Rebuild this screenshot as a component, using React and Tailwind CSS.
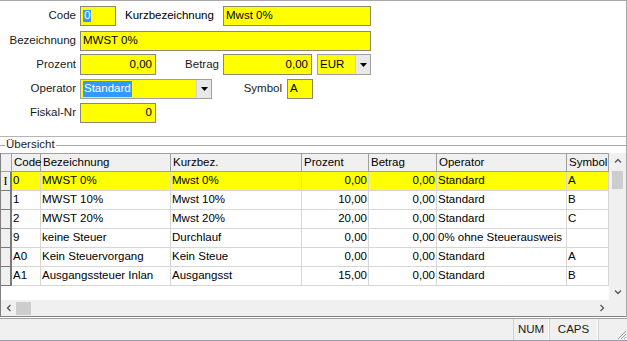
import React from "react";

const font = { fontFamily: '"Liberation Sans", Arial, sans-serif' };

function Input({ w, h = "h-[20px]", children, right = false }) {
  return (
    <div
      className={`${w} ${h} bg-[#ffff00] border border-[#8a8a6e] flex items-center ${right ? "justify-end pr-[3px]" : "pl-[2px]"} text-black`}
    >
      {children}
    </div>
  );
}

function DropBtn() {
  return (
    <div className="w-[15px] h-full bg-[#e8e8e8] border-l border-[#d0d0d0] flex items-center justify-center">
      <svg width="7" height="4" viewBox="0 0 7 4">
        <path d="M0 0h7L3.5 4z" fill="#000" />
      </svg>
    </div>
  );
}

function Label({ w, children, className = "" }) {
  return <div className={`${w} text-right text-[#1a1a1a] ${className}`}>{children}</div>;
}

const rows = [
  ["0", "MWST 0%", "Mwst 0%", "0,00", "0,00", "Standard", "A"],
  ["1", "MWST 10%", "Mwst 10%", "10,00", "0,00", "Standard", "B"],
  ["2", "MWST 20%", "Mwst 20%", "20,00", "0,00", "Standard", "C"],
  ["9", "keine Steuer", "Durchlauf", "0,00", "0,00", "0% ohne Steuerausweis", ""],
  ["A0", "Kein Steuervorgang", "Kein Steue", "0,00", "0,00", "Standard", "A"],
  ["A1", "Ausgangssteuer Inlan", "Ausgangsst", "15,00", "0,00", "Standard", "B"],
];

const widths = ["w-[29px]", "w-[130px]", "w-[131px]", "w-[67px]", "w-[68px]", "w-[130px]", "w-[42px]"];
const headers = ["Code", "Bezeichnung", "Kurzbez.", "Prozent", "Betrag", "Operator", "Symbol"];

function Chevron({ d }) {
  return (
    <svg width="8" height="8" viewBox="0 0 8 8">
      <path d={d} fill="none" stroke="#555" strokeWidth="1.3" />
    </svg>
  );
}

export default function App() {
  return (
    <div className="w-[627px] h-[341px] bg-white overflow-hidden text-[11.5px] leading-none flex flex-col" style={font}>
      <div className="flex-1 flex flex-col border-t border-r border-[#a8a8a8]">
        {/* Form */}
        <div className="h-[136px] border-b border-[#b4b4b4] flex flex-col">
          <div className="flex items-center h-[20px] mt-[5px]">
            <Label w="w-[76px]">Code</Label>
            <div className="ml-[4px]">
              <Input w="w-[36px]">
                <span className="bg-[#3399ff] text-white px-[1px]">0</span>
              </Input>
            </div>
            <div className="ml-[9px] w-[98px]">Kurzbezeichnung</div>
            <Input w="w-[148px]">Mwst 0%</Input>
          </div>
          <div className="flex items-center h-[20px] mt-[5px]">
            <Label w="w-[76px]">Bezeichnung</Label>
            <div className="ml-[4px]">
              <Input w="w-[291px]">MWST 0%</Input>
            </div>
          </div>
          <div className="flex items-center h-[21px] mt-[3px]">
            <Label w="w-[76px]">Prozent</Label>
            <div className="ml-[4px]">
              <Input w="w-[76px]" h="h-[21px]" right>0,00</Input>
            </div>
            <Label w="w-[63px]">Betrag</Label>
            <div className="ml-[4px]">
              <Input w="w-[89px]" h="h-[21px]" right>0,00</Input>
            </div>
            <div className="ml-[5px] w-[54px] h-[21px] border border-[#a0a0a0] flex">
              <div className="flex-1 bg-[#ffff00] flex items-center pl-[2px]">EUR</div>
              <DropBtn />
            </div>
          </div>
          <div className="flex items-center h-[20px] mt-[4px]">
            <Label w="w-[76px]">Operator</Label>
            <div className="ml-[4px] w-[132px] h-[20px] border border-[#a0a0a0] flex">
              <div className="flex-1 bg-[#ffff00] flex items-center pl-[2px]">
                <span className="bg-[#3399ff] text-white px-[1px] py-[2px]">Standard</span>
              </div>
              <DropBtn />
            </div>
            <Label w="w-[70px]">Symbol</Label>
            <div className="ml-[5px]">
              <Input w="w-[26px]">A</Input>
            </div>
          </div>
          <div className="flex items-center h-[20px] mt-[4px]">
            <Label w="w-[76px]">Fiskal-Nr</Label>
            <div className="ml-[4px]">
              <Input w="w-[76px]" right>0</Input>
            </div>
          </div>
        </div>

        {/* Group label */}
        <div className="h-[16px] flex items-center">
          <div className="w-[5px] h-px bg-[#a8a8a8]" />
          <span className="px-[1px] text-[#1a1a1a]">Übersicht</span>
          <div className="flex-1 h-px bg-[#a8a8a8]" />
        </div>

        {/* Grid */}
        <div className="h-[164px] border-b border-l border-[#808080] flex flex-col">
          <div className="flex flex-1">
            <div className="w-[608px] flex flex-col">
              <div className="flex h-[19px] border-t border-b border-[#a0a0a0] bg-[#f0f0f0]">
                <div className="w-[11px] border-r border-[#a0a0a0]" />
                {headers.map((h, i) => (
                  <div key={h} className={`${widths[i]} border-r border-[#a0a0a0] flex items-center pl-[2px]`}>
                    {h}
                  </div>
                ))}
              </div>
              {rows.map((r, ri) => (
                <div key={ri} className={`flex h-[19px] ${ri === 0 ? "bg-[#ffff00]" : "bg-white"}`}>
                  <div className="w-[11px] bg-[#f0f0f0] border-r-2 border-b border-[#7a7a7a] flex items-center justify-center">
                    {ri === 0 && <span className="text-[12px]" style={{ fontFamily: '"Liberation Serif", serif' }}>I</span>}
                  </div>
                  {r.map((c, ci) => (
                    <div
                      key={ci}
                      className={`${widths[ci]} border-r border-b border-[#d6d6d6] flex items-center ${ci === 3 || ci === 4 ? "justify-end pr-[1px]" : "pl-[1px]"} overflow-hidden whitespace-nowrap`}
                    >
                      {c}
                    </div>
                  ))}
                </div>
              ))}
            </div>
            <div className="w-[17px] bg-[#f0f0f0] flex flex-col items-center">
              <div className="h-[16px] flex items-center justify-center">
                <Chevron d="M1 5.5L4 2.5L7 5.5" />
              </div>
              <div className="w-[11px] h-[18px] bg-[#cdcdcd] mt-[2px]" />
              <div className="flex-1" />
              <div className="h-[16px] flex items-center justify-center">
                <Chevron d="M1 2.5L4 5.5L7 2.5" />
              </div>
            </div>
          </div>
          <div className="h-[16px] flex">
            <div className="w-[608px] bg-[#f0f0f0] flex items-center">
              <div className="w-[15px] flex justify-center">
                <Chevron d="M5.5 1L2.5 4L5.5 7" />
              </div>
              <div className="w-[15px] h-[13px] bg-[#cdcdcd]" />
              <div className="flex-1" />
              <div className="w-[15px] flex justify-center">
                <Chevron d="M2.5 1L5.5 4L2.5 7" />
              </div>
            </div>
            <div className="w-[17px] bg-[#f0f0f0]" />
          </div>
        </div>
      </div>

      {/* Status bar */}
      <div className="h-[23px] mt-[1px] bg-[#f0f0f0] border-t border-[#a0a0a0] border-b border-b-[#9a9ab8] flex">
        <div className="flex-1" />
        <div className="w-[36px] border-l border-[#d0d0d0] border-r border-r-white flex items-center justify-center text-[#1a1a1a]">NUM</div>
        <div className="w-[49px] border-l border-[#d0d0d0] border-r border-r-white flex items-center justify-center text-[#1a1a1a]">CAPS</div>
        <div className="w-[29px] border-l border-[#d0d0d0] relative">
          <svg className="absolute right-0 bottom-0" width="12" height="12" viewBox="0 0 12 12">
            <path d="M11 3L3 11M11 6L6 11M11 9L9 11" stroke="#a0a0a0" strokeWidth="1" />
          </svg>
        </div>
      </div>
    </div>
  );
}
